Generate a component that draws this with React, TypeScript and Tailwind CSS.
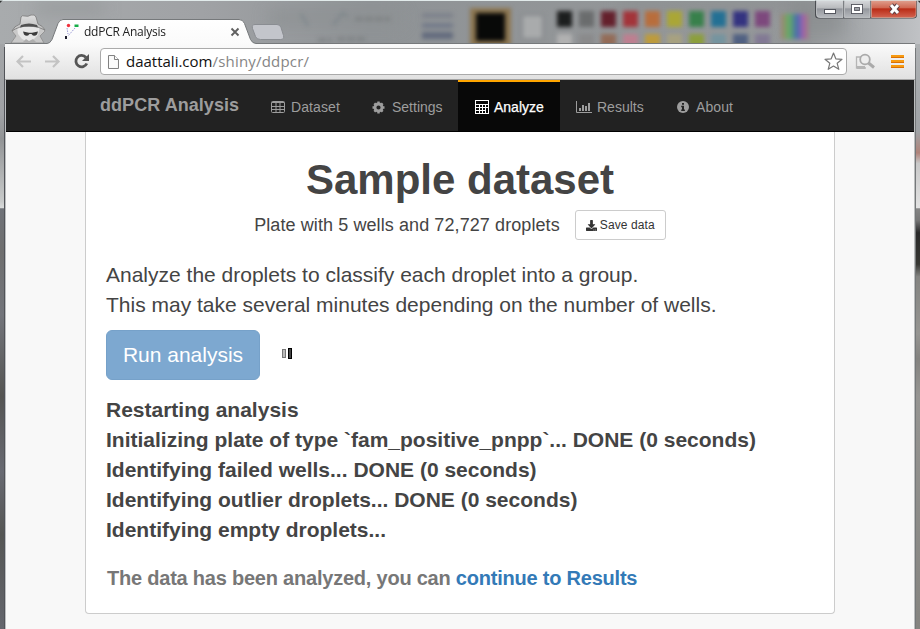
import React from "react";
import { FaDownload } from "react-icons/fa";

const swatchesTop = ["#1c1e1e", "#6a6c6d", "#64202c", "#a3343a", "#b86d3c", "#aaa636", "#38804b", "#237094", "#343380", "#7d487d"];
const swatchesLow = ["#b1b1b1", "#8a8a8b", "#936b57", "#bd7f90", "#bd9b3c", "#a7a180", "#8c9f3c", "#75949f", "#506082", "#827994"];

function Glass() {
  return (
    <svg className="absolute inset-0" width="920" height="629" viewBox="0 0 920 629">
      <defs>
        <linearGradient id="top" x1="0" x2="1" y1="0" y2="0">
          <stop offset="0" stopColor="#a8abad" />
          <stop offset=".22" stopColor="#a0a2a5" />
          <stop offset=".4" stopColor="#8f9396" />
          <stop offset=".7" stopColor="#939698" />
          <stop offset=".88" stopColor="#95989a" />
          <stop offset=".94" stopColor="#a8abae" />
          <stop offset="1" stopColor="#c0c2c5" />
        </linearGradient>
        <linearGradient id="left" gradientUnits="userSpaceOnUse" x1="0" x2="0" y1="0" y2="629">
          <stop offset="0" stopColor="#a4a6a8" />
          <stop offset=".18" stopColor="#a0a2a5" />
          <stop offset=".22" stopColor="#929496" />
          <stop offset=".32" stopColor="#c8caca" />
          <stop offset=".33" stopColor="#d8dada" />
          <stop offset=".332" stopColor="#6f7278" />
          <stop offset=".4" stopColor="#6f6f6f" />
          <stop offset=".5" stopColor="#73757b" />
          <stop offset=".63" stopColor="#555553" />
          <stop offset=".75" stopColor="#686a72" />
          <stop offset=".85" stopColor="#555654" />
          <stop offset="1" stopColor="#64666d" />
        </linearGradient>
        <linearGradient id="right" gradientUnits="userSpaceOnUse" x1="0" x2="0" y1="0" y2="629">
          <stop offset="0" stopColor="#b6b9bb" />
          <stop offset=".21" stopColor="#9fa2a5" />
          <stop offset=".243" stopColor="#b08379" />
          <stop offset=".26" stopColor="#c9c9c9" />
          <stop offset=".33" stopColor="#e2e2e2" />
          <stop offset=".332" stopColor="#858585" />
          <stop offset=".35" stopColor="#777" />
          <stop offset=".37" stopColor="#292929" />
          <stop offset=".42" stopColor="#373733" />
          <stop offset=".44" stopColor="#848481" />
          <stop offset=".53" stopColor="#969592" />
          <stop offset=".57" stopColor="#848380" />
          <stop offset=".63" stopColor="#969592" />
          <stop offset="1" stopColor="#858480" />
        </linearGradient>
        <linearGradient id="rainbow" x1="0" x2="1" y1="0" y2="0">
          <stop offset="0" stopColor="#a48272" />
          <stop offset=".3" stopColor="#63ae64" />
          <stop offset=".6" stopColor="#486bb0" />
          <stop offset=".8" stopColor="#9b62b0" />
          <stop offset="1" stopColor="#a77680" />
        </linearGradient>
        <filter id="soft" filterUnits="userSpaceOnUse" x="280" y="0" width="560" height="60" colorInterpolationFilters="sRGB"><feGaussianBlur stdDeviation="1.9" /></filter>
        <filter id="haze" x="-30%" y="-50%" width="160%" height="200%" colorInterpolationFilters="sRGB"><feGaussianBlur stdDeviation="8" /></filter>
      </defs>
      <rect width="920" height="46" fill="url(#top)" />
      <g filter="url(#haze)">
        <rect x="35" y="3" width="70" height="10" fill="#8c8f91" opacity=".6" />
        <rect x="270" y="12" width="130" height="12" fill="#8d9193" />
        <rect x="790" y="0" width="55" height="35" fill="#85888a" opacity=".55" />
        <rect x="620" y="0" width="190" height="7" fill="#858789" opacity=".7" />
      </g>
      <g filter="url(#soft)">
        <path d="M301 14l7 12M333 25l10-12 5 4" stroke="#69777f" strokeWidth="2" fill="none" opacity=".5" />
        <path d="M355 19h35M318 40h14m5-1h30" stroke="#747779" strokeWidth="4" opacity=".55" strokeDasharray="8 2" />
        <rect x="422" y="13" width="31" height="5" fill="#7e828c" />
        <rect x="422" y="23" width="31" height="5" fill="#737a89" />
        <rect x="422" y="32" width="31" height="7" fill="#646c7e" />
        <rect x="470" y="8" width="41" height="42" fill="#8d7650" />
        <rect x="476" y="13" width="29" height="28" fill="#080908" />
        <rect x="522" y="15" width="21" height="24" fill="#a9abac" stroke="#888b8d" strokeWidth="2" />
        {swatchesTop.map((c, i) => <rect key={c} x={557 + i * 22} y="11" width="15" height="16" fill={c} />)}
        {swatchesLow.map((c, i) => <rect key={c} x={557 + i * 22} y="34" width="15" height="15" fill={c} />)}
        <rect x="781" y="14" width="27" height="25" fill="url(#rainbow)" />
      </g>
      <rect y="44" width="6" height="585" fill="url(#left)" />
      <rect x="914" y="44" width="6" height="585" fill="url(#right)" />
      <path d="M0 .5h920" stroke="#e1eaea" />
      <path d="M0 0h3L0 3zM920 0h-3l3 3z" fill="#303232" />
      <path d="M4.500 47v582" stroke="#515358" />
      <path d="M5.500 80v549" stroke="#bcbec0" />
      <path d="M914.500 80v549" stroke="#bcbebe" />
      <path d="M915.500 48v581" stroke="#75787a" />
    </svg>
  );
}

function TabStrip() {
  return (
    <svg width="910" height="44" viewBox="5 0 910 44" className="block overflow-visible">
      <defs>
        <linearGradient id="tab" x1="0" x2="0" y1="0" y2="1"><stop stopColor="#fff" /><stop offset="1" stopColor="#fafafa" /></linearGradient>
        <linearGradient id="spyHat" x1="0" x2="0" y1="0" y2="1"><stop stopColor="#dedede" /><stop offset="1" stopColor="#bdbdbd" /></linearGradient>
        <linearGradient id="cap" x1="0" x2="0" y1="0" y2="1"><stop stopColor="#d8dadd" /><stop offset=".46" stopColor="#b8babd" /><stop offset=".5" stopColor="#94979d" /><stop offset="1" stopColor="#b6b9bd" /></linearGradient>
        <linearGradient id="close" x1="0" x2="0" y1="0" y2="1"><stop stopColor="#e0a392" /><stop offset=".46" stopColor="#cf6650" /><stop offset=".5" stopColor="#b92b16" /><stop offset="1" stopColor="#d26350" /></linearGradient>
      </defs>
      <path d="M11 43l5-7-4-5 3-4h27l3 4-5 5 4 7z" fill="#c9c9c9" stroke="#8b8b8b" strokeWidth=".8" />
      <path d="M17 27h23l-2 8-5 5-5 2-6-3-4-5z" fill="#e6e6e6" />
      <path d="M22 43l4-4 3 2 4-2 4 4z" fill="#aeaeae" />
      <path d="M12 31q2-5 8-7l1-7q1-2 4-1 3 1 6-1 4-1 5 2l2 7q5 2 7 6-7-4-16-4-10 0-17 5z" fill="url(#spyHat)" stroke="#808080" strokeWidth=".9" />
      <path d="M21 25q8-3 16 0l1 2.500q-9-2.500-18 0z" fill="#505050" />
      <path d="M23 31.500l6 1.300h3l6-1.300-1 3q-3 3-5.500-.6h-2q-2.500 3.600-5.500.6z" fill="#3c3c3c" />
      <path d="M5 43.500h42q3 0 5-4l6-16q1.500-4 5-4h176q4 0 5.500 4l6 16q2 4 5.500 4h659v1H5z" fill="url(#tab)" />
      <path d="M5 43.500h42q3 0 5-4l6-16q1.500-4 5-4h176q4 0 5.500 4l6 16q2 4 5.500 4h659" fill="none" stroke="#76797b" />
      <path d="M255 24.500h22q3 0 4 3l2.500 8q1 4-3 4h-20q-4 0-5-3l-3-8q-1-4 2.500-4z" fill="#c3c5cb" stroke="#8a8d92" />
      <circle cx="68.500" cy="25.500" r="1.700" fill="#f0313d" />
      <path d="M74.500 24.500h4v2.500h-4z" fill="#16ae48" />
      <path d="M67 28l1 6m7-6l-7 8" stroke="#9c9cd8" strokeWidth="1" strokeDasharray="1.500 1" />
      <path d="M66 36v3" stroke="#1d1d2d" strokeWidth="2" />
      <path d="M231.500 28.500l7 7m0-7l-7 7" stroke="#606060" strokeWidth="1.900" />
      <path d="M815 0v15q0 3.500 4 3.500h94q4 0 4-3.500V0" fill="#4a4d52" />
      <path d="M816.500 0v14.500q0 3 3 3H843V0z" fill="url(#cap)" stroke="#c8cacd" strokeWidth=".8" />
      <path d="M844.500 0v17.500H870V0z" fill="url(#cap)" stroke="#c8cacd" strokeWidth=".8" />
      <path d="M871.500 0v17.500H913q3 0 3-3V0z" fill="url(#close)" stroke="#d9a08f" strokeWidth=".8" />
      <rect x="824.500" y="9.500" width="11" height="4" fill="#fff" stroke="#54565e" />
      <rect x="853" y="6" width="8" height="6" fill="none" stroke="#50525a" strokeWidth="4" />
      <rect x="853" y="6" width="8" height="6" fill="none" stroke="#fff" strokeWidth="2.200" />
      <path d="M891 5l7 8m0-8l-7 8" stroke="#5c3e43" strokeWidth="5" />
      <path d="M891 5l7 8m0-8l-7 8" stroke="#fff" strokeWidth="3" />
      <path d="M0 .5h920" stroke="#e1eaea" opacity=".7" />
    </svg>
  );
}

function Toolbar() {
  return (
    <div className="flex h-9 items-start border-b border-[#a5a5a5] bg-gradient-to-b from-[#fafafa] to-[#e1e1e1] pl-[11px] pt-1">
      <svg width="84" height="28" viewBox="16 48 84 28" fill="none">
        <path d="M31 61.500H17.500M23 56l-5.500 5.500L23 67M45 61.500h13.500M53 56l5.500 5.500L53 67" stroke="#c3c3c3" strokeWidth="2.200" />
        <path d="M86 57.500a5.700 5.700 0 1 0 .8 6" stroke="#555" strokeWidth="2.800" />
        <path d="M89 54v7h-7z" fill="#555" />
      </svg>
      <div className="flex h-[27px] w-[747px] items-center rounded-sm border border-[#aaa] bg-white pl-[6px] font-['Open_Sans',sans-serif] text-[15px] leading-[25px]">
        <svg width="13" height="16" viewBox="0 0 13 16" fill="#fbfbfb" stroke="#808080">
          <path d="M1.500 1.500h6l4 4v9h-10z" /><path d="M7.500 1.500v4h4" />
        </svg>
        <div className="ml-[6px] w-[700px] whitespace-nowrap text-[#111]">daattali.com<span className="tracking-[0.2px] text-[#858585]">/shiny/ddpcr/</span></div>
        <svg className="mr-[3px] shrink-0" width="19" height="19" viewBox="0 0 19 19" fill="#fff" stroke="#777" strokeWidth="1.200" strokeLinejoin="round">
          <path d="M9.500 1l2.300 5.800 6.200.5-4.800 4 1.600 6-5.300-3.300-5.300 3.300 1.600-6-4.800-4 6.200-.5z" />
        </svg>
      </div>
      <svg width="60" height="28" viewBox="847 48 60 28" fill="none">
        <path d="M862 57h-5.500v11H866" stroke="#b5b5b5" strokeWidth="1.300" />
        <path d="M857 66h8v3h-8z" fill="#b5b5b5" />
        <circle cx="865" cy="59.500" r="4.800" fill="#eee" stroke="#aaa" strokeWidth="1.800" />
        <path d="M868.500 63l5.500 4.500" stroke="#aaa" strokeWidth="3" />
        <path d="M891 56.500h13M891 61.500h13M891 66.500h13" stroke="#f79a10" strokeWidth="3" />
        <path d="M891 57.500h13M891 62.500h13M891 67.500h13" stroke="#d97006" />
      </svg>
    </div>
  );
}

const TableIcon = () => (
  <svg width="14" height="13" viewBox="0 0 14 13" fill="none" stroke="currentColor">
    <rect x=".5" y=".5" width="13" height="11" rx="1" /><path d="M1 1.500h12M1 5.500h12M1 8.500h12M5 2v9.500M9 2v9.500" />
  </svg>
);
const CogIcon = () => (
  <svg width="13" height="13" viewBox="0 0 13 13" fill="none" stroke="currentColor">
    <circle cx="6.500" cy="6.500" r="3.500" strokeWidth="2.800" />
    <path d="M6.500.5v2M6.500 10.500v2M.5 6.500h2M10.500 6.500h2M2.300 2.300l1.400 1.400M9.300 9.300l1.400 1.400M2.300 10.700l1.400-1.400M9.300 3.700l1.400-1.400" strokeWidth="2.400" />
  </svg>
);
const CalcIcon = () => (
  <svg width="14" height="14" viewBox="0 0 14 14" fill="none" stroke="currentColor">
    <rect x=".5" y=".5" width="13" height="13" />
    <path d="M1 4.500h12M1 7.500h12M1 10.500h9M4.500 5v8M7.500 5v8M10.500 5v8" />
  </svg>
);
const ChartIcon = () => (
  <svg width="16" height="13" viewBox="0 0 16 13" fill="none" stroke="currentColor">
    <path d="M.5 0v11.500H16" /><path d="M4 7v3M7 4v6M10 5v5M13 2v8" strokeWidth="2" />
  </svg>
);
const InfoIcon = () => (
  <svg width="12" height="12" viewBox="0 0 12 12">
    <circle cx="6" cy="6" r="6" fill="currentColor" />
    <path d="M5 2h2v1.700H5zM4.200 4.800H7v3.700h.9V10H4.200V8.500H5V6.200h-.8z" fill="#222" />
  </svg>
);

function NavItem({ icon, label, className, text }: { icon: React.ReactNode; label: string; className: string; text: string }) {
  return (
    <div className={"flex h-[51px] items-center " + className}>
      {icon}<span className={"whitespace-nowrap leading-5 " + text}>{label}</span>
    </div>
  );
}

function Navbar() {
  return (
    <nav className="flex h-[52px] border-b border-black bg-[#222] pl-[94px] text-[14px] text-[#9d9d9d]">
      <div className="w-[155px] whitespace-nowrap pt-[15px] text-[18px] font-bold leading-5 tracking-[0.05px]">ddPCR Analysis</div>
      <NavItem icon={<TableIcon />} label="Dataset" className="w-[101px] pl-4 pt-[3px]" text="ml-1.5 tracking-[0.1px]" />
      <NavItem icon={<CogIcon />} label="Settings" className="w-[102px] pl-4 pt-[3px]" text="ml-[7px]" />
      <NavItem icon={<CalcIcon />} label="Analyze" className="w-[102px] border-t-2 border-[#ffa500] bg-[#080808] pl-[17px] pt-px text-white" text="ml-[5px] [-webkit-text-stroke:0.25px_white]" />
      <NavItem icon={<ChartIcon />} label="Results" className="w-[100px] pl-4 pt-[3px]" text="ml-[5px]" />
      <NavItem icon={<InfoIcon />} label="About" className="w-[90px] pl-[17px] pt-[3px]" text="ml-[7px] tracking-[0.1px]" />
    </nav>
  );
}

export default function App() {
  return (
    <div className="relative h-[629px] w-[920px] overflow-hidden font-['Liberation_Sans',Arial,sans-serif]">
      <Glass />
      <div className="relative ml-[5px] w-[910px]">
        <div className="relative">
          <TabStrip />
          <span className="absolute left-[79px] top-[23px] whitespace-nowrap font-['Open_Sans',sans-serif] text-[12px] leading-[18px] tracking-[-0.24px] text-[#222]">ddPCR Analysis</span>
        </div>
        <div className="mx-px w-[908px]">
          <div className="-ml-px w-[910px]"><Toolbar /></div>
          <Navbar />
          <main className="h-[497px] bg-[#f8f8f8] pl-[79px]">
            <section className="h-[482px] w-[750px] rounded-b border border-t-0 border-[#ccc] bg-white px-5 pt-[23px] text-[#444]">
              <h1 className="text-center text-[42px] font-bold leading-[50px]">Sample dataset</h1>
              <div className="mt-[5px] flex h-[30px] items-center justify-center gap-[15px] text-[18px]">
                <span className="whitespace-nowrap tracking-[0.09px]">Plate with 5 wells and 72,727 droplets</span>
                <button className="flex h-[30px] w-[91px] items-center justify-center gap-[3px] whitespace-nowrap rounded-[3px] border border-[#ccc] bg-white text-[12px] tracking-[0.1px] text-[#333]"><FaDownload size={11} />Save data</button>
              </div>
              <p className="mt-5 whitespace-nowrap text-[21px] leading-[30px]">Analyze the droplets to classify each droplet into a group.<br />This may take several minutes depending on the number of wells.</p>
              <div className="mt-[10px] flex h-[50px] items-center">
                <button className="h-[50px] w-[154px] whitespace-nowrap rounded-md border border-[#76a1c9] bg-[#7da8d0] text-[21px] text-white">Run analysis</button>
                <svg className="mb-[2px] ml-[21px]" width="14" height="14" viewBox="0 0 14 14">
                  <rect x="1.500" y="2.500" width="3" height="8" fill="#bbb" stroke="#777" /><rect x="7.500" y="1.500" width="3" height="10" fill="#444" stroke="#000" />
                </svg>
              </div>
              <div className="mt-[15px] whitespace-nowrap text-[21px] font-bold leading-[30px]">
                <p>Restarting analysis</p>
                <p>Initializing plate of type `fam_positive_pnpp`... DONE (0 seconds)</p>
                <p>Identifying failed wells... DONE (0 seconds)</p>
                <p>Identifying outlier droplets... DONE (0 seconds)</p>
                <p>Identifying empty droplets...</p>
              </div>
              <p className="ml-px mt-[18px] whitespace-nowrap text-[20px] font-bold leading-[30px] tracking-[-0.22px] text-[#777]">The data has been analyzed, you can <a className="text-[#337ab7]">continue to Results</a></p>
            </section>
          </main>
        </div>
      </div>
    </div>
  );
}
